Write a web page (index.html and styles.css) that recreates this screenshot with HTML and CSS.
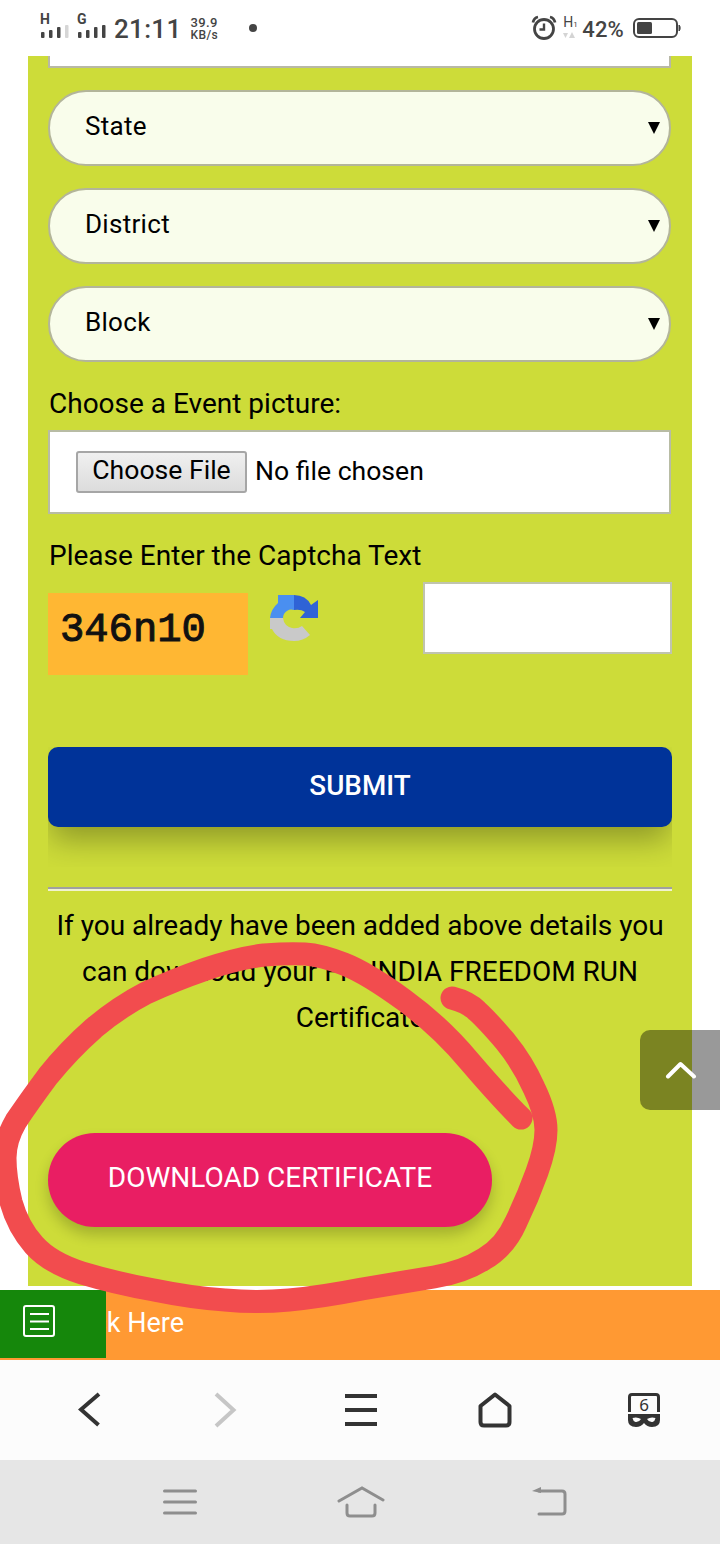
FILE: index.html
```html
<!DOCTYPE html>
<html lang="en">
<head>
<meta charset="utf-8">
<title>Freedom Run</title>
<link rel="stylesheet" href="styles.css">
</head>
<body>
<div class="page">
  <header class="status">
    <div class="net net-first">
      <span class="net-letter">H</span>
      <svg class="bars" width="28" height="13" viewBox="0 0 28 13"><rect class="b" x="0" y="7" width="3.5" height="6" rx="1"/><rect class="b" x="8" y="5" width="3.5" height="8" rx="1"/><rect class="b" x="16" y="2" width="3.5" height="11" rx="1"/><rect class="b-off" x="24" y="0" width="3.5" height="13" rx="1"/></svg>
    </div>
    <div class="net net-second">
      <span class="net-letter">G</span>
      <svg class="bars" width="28" height="13" viewBox="0 0 28 13"><rect class="b" x="0" y="7" width="3.5" height="6" rx="1"/><rect class="b" x="8" y="5" width="3.5" height="8" rx="1"/><rect class="b" x="16" y="2" width="3.5" height="11" rx="1"/><rect class="b" x="24" y="0" width="3.5" height="13" rx="1"/></svg>
    </div>
    <span class="time">21:11</span>
    <div class="speed"><span>39.9</span><span class="speed-unit">KB/s</span></div>
    <span class="dot"></span>
    <div class="status-right">
      <svg class="alarm" width="26" height="26" viewBox="0 0 26 26"><circle cx="13" cy="14" r="9.5" fill="none" stroke="#444" stroke-width="2.8"/><path d="M13 8.500V14.500H8.500" fill="none" stroke="#444" stroke-width="2.4"/><path d="M2 7.500C2.500 4.500 4.500 2.500 7 2M24 7.500C23.500 4.500 21.500 2.500 19 2" fill="none" stroke="#444" stroke-width="2.8"/></svg>
      <div class="hd"><span class="hd-text">H<small>1</small></span><svg width="12" height="6" viewBox="0 0 12 6"><path d="M0 1H5L2.500 6ZM6 6H12L9 0Z" fill="#d4d4d4"/></svg></div>
      <span class="pct">42%</span>
      <svg class="battery" width="48" height="22" viewBox="0 0 48 22"><rect x="1" y="2" width="43" height="18" rx="5" fill="none" stroke="#444" stroke-width="2"/><rect x="4" y="5" width="15" height="12" rx="1.5" fill="#444"/><path d="M46 8C47.500 8.500 47.500 13.500 46 14Z" fill="#444" stroke="#444"/></svg>
    </div>
  </header>

  <main class="panel">
    <div class="clipped-input"></div>
    <div class="select"><span>State</span><i class="caret"></i></div>
    <div class="select"><span>District</span><i class="caret"></i></div>
    <div class="select"><span>Block</span><i class="caret"></i></div>

    <div class="label label-file">Choose a Event picture:</div>
    <div class="file-box">
      <span class="file-btn">Choose File</span>
      <span>No file chosen</span>
    </div>

    <div class="label label-captcha">Please Enter the Captcha Text</div>
    <div class="captcha-row">
      <div class="captcha">346n10</div>
      <svg class="refresh" width="48" height="47" viewBox="0 0 48 47">
        <path d="M0 23Q1 14 8 8L8 0H24V15Q18 13 14 19Q13 21 13 23Z" fill="#4a8ff0"/>
        <path d="M24 0Q36 0 41 10L48 5V23H30L35 17Q31 14 24 15Z" fill="#2f63d6"/>
        <path d="M0 23H13Q14 31 22 33Q28 34 32 31L40 40Q33 46 24 46Q8 46 2 34L0 34Z" fill="#c9c9c9"/>
      </svg>
      <div class="captcha-input"></div>
    </div>

    <div class="submit-wrap"><div class="submit">SUBMIT</div></div>
    <hr class="rule">

    <p class="note">If you already have been added above details you can download your FIT INDIA FREEDOM RUN Certificate</p>

    <div class="download">DOWNLOAD CERTIFICATE</div>
  </main>

  <div class="orange-bar">
    <span class="click-text">Click Here</span>
    <div class="green-tab">
      <svg width="32" height="32" viewBox="0 0 32 32"><rect x="1" y="1" width="30" height="30" rx="2" fill="none" stroke="#fff" stroke-width="2"/><path d="M7 9H26M7 16.500H26M7 24H26" stroke="#fff" stroke-width="2"/></svg>
    </div>
  </div>

  <nav class="browser-nav">
    <svg width="24" height="36" viewBox="0 0 24 36"><path d="M21 2L3 17.500L20.500 33" fill="none" stroke="#333" stroke-width="4"/></svg>
    <svg width="24" height="36" viewBox="0 0 24 36"><path d="M3 2L20.500 18L3 34" fill="none" stroke="#c6c6c6" stroke-width="4"/></svg>
    <svg width="32" height="32" viewBox="0 0 32 32"><path d="M0 2H32M0 16H32M0 30H32" stroke="#333" stroke-width="4"/></svg>
    <svg width="34" height="36" viewBox="0 0 34 36"><path d="M17 2.500L31.500 14V30Q31.500 33.500 28 33.500H6Q2.500 33.500 2.500 30V14Z" fill="none" stroke="#333" stroke-width="4" stroke-linejoin="round"/></svg>
    <div class="tabs">
      <svg width="32" height="35" viewBox="0 0 32 35">
        <path d="M1.500 19V4Q1.500 1.500 4 1.500H28Q30.500 1.500 30.500 4V19" fill="none" stroke="#333" stroke-width="3"/>
        <path d="M0 21H32V27Q32 34 24 34Q19 34 16 30Q13 34 8 34Q0 34 0 27Z" fill="#333"/>
        <path d="M4.500 25Q9 23.500 13 26Q11 29.500 7.500 29Q5 28 4.500 25ZM27.500 25Q23 23.500 19 26Q21 29.500 24.500 29Q27 28 27.500 25Z" fill="#fcfcfc"/>
      </svg>
      <span class="tab-count">6</span>
    </div>
  </nav>

  <nav class="system-nav">
    <svg class="sys-menu" width="34" height="26" viewBox="0 0 34 26"><path d="M1.500 2H32.500M1.500 13H32.500M1.500 24H32.500" stroke="#8e8e8e" stroke-width="3" stroke-linecap="round"/></svg>
    <svg class="sys-home" width="48" height="32" viewBox="0 0 48 32"><path d="M2 15L25 2L46 14M10 19V27Q10 30 13 30H35Q38 30 38 27V19" fill="none" stroke="#8e8e8e" stroke-width="3" stroke-linecap="round"/></svg>
    <svg class="sys-back" width="36" height="30" viewBox="0 0 36 30"><path d="M8 5H31Q34 5 34 8V25Q34 28 31 28H8" fill="none" stroke="#8e8e8e" stroke-width="3" stroke-linecap="round"/><path d="M1 5L10 1V7Z" fill="#8e8e8e"/></svg>
  </nav>

  <div class="to-top">
    <svg width="32" height="18" viewBox="0 0 32 18"><path d="M3 15.500L15.500 3L29 15.500" fill="none" stroke="#fff" stroke-width="4" stroke-linecap="round" stroke-linejoin="round"/></svg>
  </div>

  <svg class="scribble" width="720" height="1544" viewBox="0 0 720 1544">
    <path d="M521 1118Q500 1097 470 1062Q441 1027 404 1000Q367 973 344 964Q321 955 305 954Q289 953 264 955Q239 958 206 969Q174 980 146 993Q119 1007 94 1028Q69 1050 48 1076Q28 1103 16 1121Q5 1140 5 1158Q5 1177 11 1202Q18 1227 34 1245Q50 1263 82 1273Q115 1283 154 1290Q193 1298 225 1300Q257 1303 289 1300Q321 1297 362 1289Q404 1282 434 1277Q464 1272 484 1259Q505 1247 516 1222Q528 1197 537 1172Q546 1147 546 1130Q546 1113 534 1088Q523 1063 505 1041Q487 1020 477 1011Q468 1002 452 998" fill="none" stroke="#f24c4e" stroke-width="23" stroke-linecap="round" stroke-linejoin="round"/>
  </svg>
</div>
</body>
</html>
```

FILE: styles.css
```css
* { box-sizing: border-box; }
html, body { margin: 0; padding: 0; background: #fff; }
body { font-family: Roboto, "Liberation Sans", sans-serif; color: #000; }
.page { position: relative; width: 720px; height: 1544px; overflow: hidden; }

/* status bar */
.status { height: 56px; display: flex; align-items: flex-start; padding-left: 41px; color: #444; }
.net { display: flex; flex-direction: column; width: 28px; margin-top: 13px; }
.net-letter { display: block; font-size: 14px; font-weight: 700; line-height: 12px; height: 12px; margin-left: -1px; }
.net-second { margin-left: 9px; }
.bars { display: block; }
.b { fill: #444; }
.b-off { fill: #d6d6d6; }
.time { font-size: 26px; font-weight: 500; line-height: 30px; margin: 14px 0 0 8px; letter-spacing: 0.3px; }
.speed { display: flex; flex-direction: column; margin: 16px 0 0 9px; font-size: 13px; font-weight: 500; line-height: 13px; letter-spacing: 0.4px; }
.speed-unit { font-size: 12px; }
.dot { width: 8px; height: 8px; border-radius: 50%; background: #444; margin: 24px 0 0 31px; }
.status-right { display: flex; align-items: flex-start; margin-left: auto; }
.alarm { margin: 15px 0 0 0; }
.hd { display: flex; flex-direction: column; align-items: flex-start; margin: 15px 0 0 6px; width: 21px; }
.hd-text { font-size: 14px; line-height: 15px; }
.hd-text small { font-size: 8px; }
.pct { font-size: 22px; font-weight: 500; line-height: 26px; margin-top: 17px; margin-left: -2px; letter-spacing: 0.2px; }
.battery { margin: 17px 39px 0 9px; }

/* panel */
.panel { margin: 0 28px; padding: 0 20px 59px; background: #cddc39; }
.clipped-input { height: 12px; width: 623px; background: #fff; border: 2px solid #b8b8a6; border-top: 0; }
.select { display: flex; align-items: center; justify-content: space-between; width: 623px; height: 76px; margin-top: 22px; padding: 0 9px 4px 35px; background: #f9fdeb; border: 2px solid #b3b59a; border-radius: 38px; font-size: 26px; letter-spacing: 0.3px; }
.caret { width: 0; height: 0; margin-top: 4px; border-left: 6px solid transparent; border-right: 6px solid transparent; border-top: 12px solid #000; }
.label { font-size: 28px; line-height: 42px; height: 40px; padding-left: 1px; }
.label-file { margin-top: 21px; }
.label-captcha { margin-top: 21px; }
.file-box { display: flex; align-items: center; gap: 8px; width: 623px; height: 84px; margin-top: 7px; padding: 0 0 4px 26px; background: #fff; border: 2px solid #b8bca4; font-size: 26.6px; }
.file-btn { display: flex; align-items: center; justify-content: center; width: 171px; height: 42px; margin-top: 4px; padding-bottom: 5px; background: linear-gradient(#f0f0f0, #dcdcdc); border: 2px solid #a6a6a6; border-radius: 3px; }
.captcha-row { display: flex; align-items: flex-start; height: 93px; margin-top: 7px; }
.captcha { width: 200px; height: 82px; margin-top: 11px; padding: 13px 0 0 12px; background: #ffb733; color: #111; font-family: "Liberation Mono", monospace; font-weight: 400; font-size: 40.5px; line-height: 48px; -webkit-text-stroke: 1px #111; }
.refresh { margin: 13px 0 0 22px; }
.captcha-input { width: 249px; height: 72px; margin-left: 105px; background: #fff; border: 2px solid #c0c4ae; }
.submit-wrap { width: 624px; height: 120px; margin-top: 72px; overflow: hidden; }
.submit { display: flex; align-items: center; justify-content: center; height: 80px; padding-bottom: 4px; background: #003399; border-radius: 10px; color: #fff; font-size: 27.8px; font-weight: 500; box-shadow: 0 16px 30px -3px rgba(0, 0, 0, 0.3); }
.rule { width: 624px; height: 4px; margin: 20px 0 0; border: 0; border-top: 2px solid #a0a0a0; background: #f0f3d0; }
.note { margin: 12px 0 0; font-size: 28px; line-height: 46px; text-align: center; }
.download { display: flex; align-items: center; justify-content: center; width: 444px; height: 94px; margin-top: 92px; padding-bottom: 6px; background: #e91e63; border-radius: 47px; color: #fff; font-size: 28px; box-shadow: 0 8px 14px rgba(0, 0, 0, 0.2); }

/* bottom bars */
.orange-bar { position: relative; display: flex; align-items: center; height: 70px; margin-top: 4px; padding: 0 0 5px 62px; background: #ff9933; color: #fff; font-size: 27px; }
.green-tab { position: absolute; left: 0; top: 0; display: flex; align-items: center; width: 106px; height: 68px; padding: 0 0 6px 23px; background: #15870b; }
.browser-nav { display: flex; align-items: center; height: 100px; padding-left: 78px; background: #fcfcfc; }
.browser-nav > :nth-child(2) { margin-left: 111px; }
.browser-nav > :nth-child(3) { margin-left: 108px; }
.browser-nav > :nth-child(4) { margin-left: 101px; }
.tabs { position: relative; width: 32px; height: 35px; margin-left: 116px; }
.tabs svg { display: block; }
.tab-count { position: absolute; top: 3px; left: 0; width: 32px; text-align: center; font-size: 17px; line-height: 17px; color: #333; font-family: "Noto Sans", sans-serif; }
.system-nav { display: flex; align-items: center; height: 84px; background: #e6e6e6; padding-left: 163px; }
.sys-menu { margin-top: 0; }
.sys-home { margin-left: 140px; }
.sys-back { margin-left: 146px; margin-top: -3px; }

/* overlays */
.to-top { position: absolute; left: 640px; top: 1030px; display: flex; align-items: center; justify-content: center; width: 80px; height: 80px; padding: 0 0 0 2px; background: rgba(0, 0, 0, 0.4); border-radius: 10px 0 0 10px; }
.scribble { position: absolute; left: 0; top: 0; pointer-events: none; }
```
